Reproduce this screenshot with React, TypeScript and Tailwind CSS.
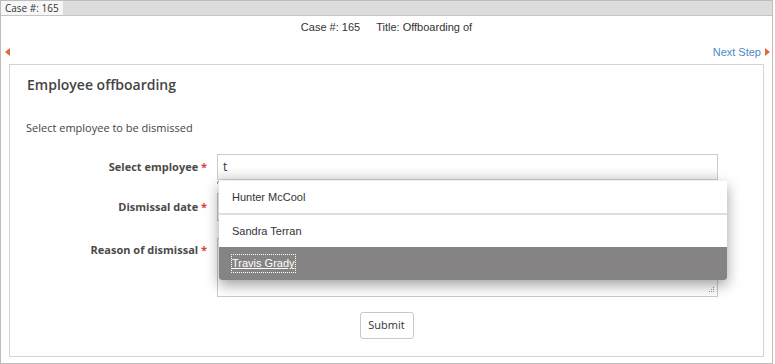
import React from 'react';

const openSans = "font-['Open_Sans',sans-serif]";
const arial = "font-['Liberation_Sans',Arial,sans-serif]";

interface FieldRowProps {
    label: string;
    className?: string;
    labelClassName?: string;
    children: React.ReactNode;
}

// Form row: right aligned label + field
const FieldRow: React.FC<FieldRowProps> = ({ label, className = "", labelClassName = "", children }) => (
    <div className={`flex ${className}`}>
        <div className={`w-[197px] text-right text-[11px] font-bold text-[#4a4a4a] ${openSans} ${labelClassName}`}>
            {label} <span className="text-[#e23b3b]">*</span>
        </div>
        <div className="ml-[10px] w-[501px] relative">{children}</div>
    </div>
);

const ArrowLeft = () => (
    <svg width="5" height="8" viewBox="0 0 5 8">
        <polygon points="5,0 0,4 5,8" fill="#e2683a" />
    </svg>
);

const ArrowRight = () => (
    <svg width="5" height="8" viewBox="0 0 5 8">
        <polygon points="0,0 5,4 0,8" fill="#e2683a" />
    </svg>
);

const employees = ["Hunter McCool", "Sandra Terran", "Travis Grady"];

export default function App() {
    return (
        <div className="w-[773px] h-[364px] border border-[#bdbdbd] bg-white flex flex-col overflow-hidden">
            {/* Tab strip */}
            <div className="h-[15px] bg-[#dcdcdc] border-b border-[#c4c4c4] flex shrink-0">
                <div className={`h-[14px] bg-[#f7f7f7] px-[4px] text-[10px] leading-[14px] text-[#333] ${openSans}`}>
                    Case #: 165
                </div>
            </div>

            {/* Case header */}
            <div className={`mt-[4px] h-[14px] text-center text-[11px] leading-[14px] text-[#333] ${arial}`}>
                Case #: 165<span className="inline-block w-[16px]" />Title: Offboarding of
            </div>

            {/* Step nav */}
            <div className="mt-[11px] h-[14px] flex items-center justify-between pl-[4px] pr-[2px]">
                <ArrowLeft />
                <div className="flex items-center gap-[4px]">
                    <span className={`text-[11px] text-[#4d87c7] ${arial}`}>Next Step</span>
                    <ArrowRight />
                </div>
            </div>

            {/* Panel */}
            <div className="mt-[5px] mx-[8px] h-[293px] border border-[#d4d4d4] pt-[10px] pl-[17px]">
                <h1 className={`text-[14px] leading-[19px] font-semibold text-[#444] ${openSans}`}>
                    Employee offboarding
                </h1>

                <p className={`mt-[26px] -ml-[1px] text-[11px] leading-[15px] text-[#444] ${openSans}`}>
                    Select employee to be dismissed
                </p>

                <div className="-ml-[17px] mt-[19px]">
                    <FieldRow label="Select employee" className="items-center">
                        <div className={`h-[26px] border border-[#cbcbcb] bg-gradient-to-b from-white from-50% to-[#ececec] pl-[5px] text-[12px] leading-[24px] text-[#333] ${openSans}`}>
                            t
                        </div>
                        <div className="absolute left-0 top-[27px] w-[2px] h-[3px] border-l border-t border-[#6aa0d8] rounded-tl-[2px]" />

                        {/* Autocomplete list */}
                        <div className={`absolute left-[2px] top-[27px] w-[508px] z-10 bg-white rounded-b-[3px] shadow-[0_5px_14px_rgba(0,0,0,0.38)] overflow-hidden text-[11px] ${arial}`}>
                            {employees.map((name, i) => (
                                <div
                                    key={name}
                                    className={
                                        i === 2
                                            ? "h-[33px] bg-[#858383] text-white flex items-center pl-[13px]"
                                            : i === 0
                                                ? "h-[34px] flex items-center pl-[13px] text-[#333] border-b-2 border-[#dedede]"
                                                : "h-[32px] flex items-center pl-[13px] text-[#333]"
                                    }
                                >
                                    {i === 2 ? (
                                        <span className="underline outline-1 outline-dotted outline-white">{name}</span>
                                    ) : (
                                        name
                                    )}
                                </div>
                            ))}
                        </div>
                    </FieldRow>

                    <FieldRow label="Dismissal date" className="mt-[13px] items-center">
                        <div className="h-[28px] border border-[#cbcbcb] bg-white" />
                    </FieldRow>

                    <FieldRow label="Reason of dismissal" className="mt-[17px]" labelClassName="pt-[4px]">
                        <div className="h-[59px] border border-[#cbcbcb] bg-white relative">
                            <svg className="absolute right-[2px] bottom-[2px]" width="7" height="7" viewBox="0 0 7 7">
                                <rect x="5" y="0" width="1" height="1" fill="#999" />
                                <rect x="3" y="2" width="1" height="1" fill="#999" />
                                <rect x="5" y="2" width="1" height="1" fill="#999" />
                                <rect x="1" y="4" width="1" height="1" fill="#999" />
                                <rect x="3" y="4" width="1" height="1" fill="#999" />
                                <rect x="5" y="4" width="1" height="1" fill="#999" />
                            </svg>
                        </div>
                    </FieldRow>
                </div>

                <div className="-ml-[17px] mt-[15px] flex justify-center">
                    <button className={`h-[27px] w-[54px] border border-[#c8c8c8] rounded-[3px] bg-white text-[11px] text-[#333] ${openSans}`}>
                        Submit
                    </button>
                </div>
            </div>
        </div>
    );
}
